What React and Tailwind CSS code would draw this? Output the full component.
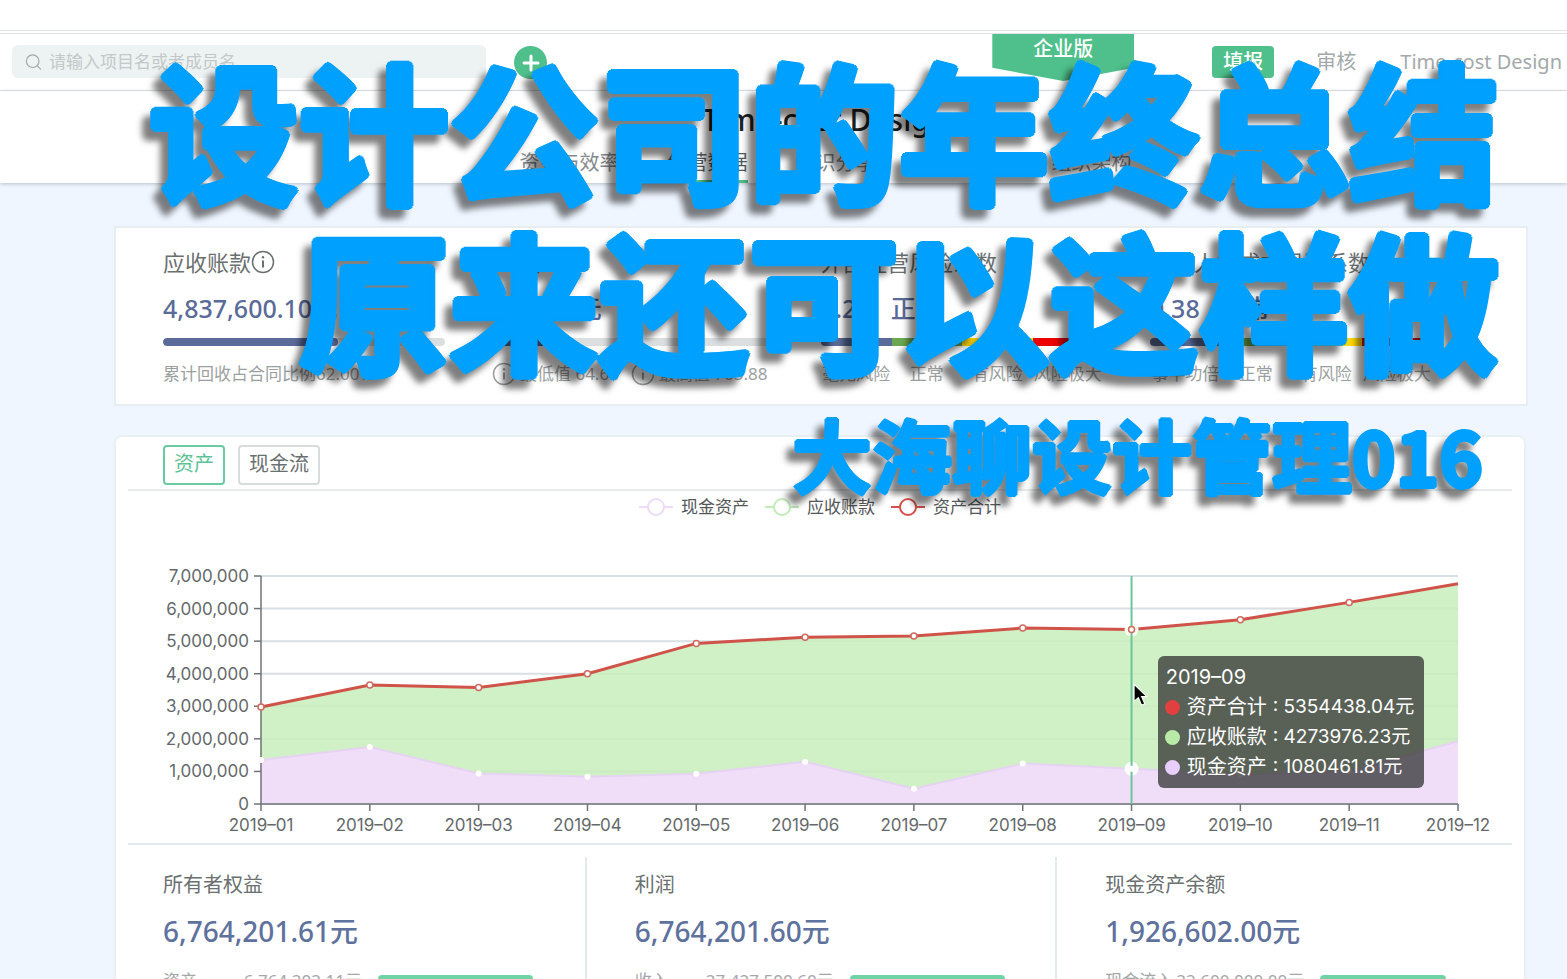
import React, { useState } from 'react';
import { Plus, Search } from 'lucide-react';

const NAV_ITEMS = ['资金与效率', '经营数据', '知识分享', '项目管理', '组织架构'];

const RISK_COLORS = ['bg-[#5a6b9b]', 'bg-[#69a84f]', 'bg-[#ffd900]', 'bg-[#ec0000]'];

const MONTHS = [
  { label: '2019–01', total: 2980000, cash: 1350000 },
  { label: '2019–02', total: 3650000, cash: 1750000 },
  { label: '2019–03', total: 3580000, cash: 940000 },
  { label: '2019–04', total: 4000000, cash: 840000 },
  { label: '2019–05', total: 4930000, cash: 930000 },
  { label: '2019–06', total: 5120000, cash: 1300000 },
  { label: '2019–07', total: 5160000, cash: 470000 },
  { label: '2019–08', total: 5400000, cash: 1240000 },
  { label: '2019–09', total: 5354438, cash: 1080461 },
  { label: '2019–10', total: 5660000, cash: 900000 },
  { label: '2019–11', total: 6190000, cash: 1000000 },
  { label: '2019–12', total: 6764201, cash: 1926602 },
];

const LEGEND = [
  { name: '现金资产', color: '#ecdcf8' },
  { name: '应收账款', color: '#c3ecb9' },
  { name: '资产合计', color: '#d6514d' },
];

const TOOLTIP_ROWS = [
  { name: '资产合计', value: '5354438.04元', dot: 'bg-[#e04040]' },
  { name: '应收账款', value: '4273976.23元', dot: 'bg-[#b9eaa8]' },
  { name: '现金资产', value: '1080461.81元', dot: 'bg-[#e9cdfb]' },
];

const SUMMARY = [
  { title: '所有者权益', value: '6,764,201.61元', label: '资产', amount: '6,764,202.11元', bar: 'w-[155px]' },
  { title: '利润', value: '6,764,201.60元', label: '收入', amount: '27,427,500.60元', bar: 'w-[155px]' },
  { title: '现金资产余额', value: '1,926,602.00元', label: '现金流入', amount: '22,600,000.00元', bar: 'w-[126px]' },
];

const InfoIcon = () => (
  <svg viewBox="0 0 24 24" className="h-6 w-6 shrink-0" fill="none" stroke="currentColor" strokeWidth="1.5" aria-hidden="true">
    <circle cx="12" cy="12" r="10.5" />
    <path d="M12 10.5v7" strokeWidth="2" />
    <circle cx="12" cy="7.2" r="1.2" fill="currentColor" stroke="none" />
  </svg>
);

const Header = () => (
  <header className="flex h-[61px] items-start border-t border-b border-[#dfe6e9]">
    <div className="mt-[2px] flex h-[57px] w-full items-start border-t border-[#dce5ee]">
      <div className="mt-[11px] ml-3 flex h-[33px] w-[474px] items-center gap-[6px] rounded-md bg-[#edf2f2] pl-3 text-[#a3a9aa]">
        <Search className="h-5 w-5" strokeWidth={1.5} />
        <input
          type="text"
          aria-label="搜索"
          placeholder="请输入项目名或者成员名"
          className="w-full bg-transparent text-[17px] outline-none placeholder:text-[#c3c8c9]"
        />
      </div>
      <button type="button" aria-label="新建" className="mt-3 ml-7 flex h-[33px] w-[33px] items-center justify-center rounded-full bg-[#4fbf8b] text-white">
        <Plus className="h-6 w-6" strokeWidth={3} />
      </button>
      <div className="ml-auto h-[47px] w-[142px] bg-[#4fbf8b] pt-px text-center text-xl leading-7 font-medium text-white [clip-path:polygon(0_0,100%_0,100%_72%,50%_100%,0_72%)]">
        企业版
      </div>
      <button type="button" className="mt-3 ml-[78px] h-8 w-[62px] rounded bg-[#4fbf8b] text-xl leading-8 font-medium text-white">
        填报
      </button>
      <a href="#audit" className="mt-3 ml-[42px] text-xl leading-8 text-[#a3a9aa]">审核</a>
      <span className="mt-3 mr-[5px] ml-11 text-xl leading-8 whitespace-nowrap text-[#a3a9aa]">Time-cost Design</span>
    </div>
  </header>
);

const Nav = () => (
  <nav className="flex h-[92px] flex-col items-center justify-between bg-white pt-[9px] pl-[84px] shadow-[0_1px_4px_rgba(0,0,0,0.22)]">
    <h1 className="text-[30px] leading-10 font-medium text-[#1c1f22]">Time-cost Design</h1>
    <ul className="flex gap-12">
      {NAV_ITEMS.map((item) => (
        <li key={item}>
          <a
            href={`#${item}`}
            className={
              item === '经营数据'
                ? 'block border-b-3 border-[#4fbf8b] pb-px text-xl leading-8 text-[#555a5c]'
                : 'block border-b-3 border-transparent pb-px text-xl leading-8 text-[#85898b]'
            }
          >
            {item}
          </a>
        </li>
      ))}
    </ul>
  </nav>
);

const Metric = ({ title, info, value, status, children }) => (
  <div className="min-w-0 pr-[47px]">
    <h2 className="flex items-center text-[22px] leading-8 whitespace-nowrap text-[#6a6f70]">
      {title}
      {info && <InfoIcon />}
    </h2>
    <p className="mt-3 flex gap-5 text-[25px] leading-9 font-medium whitespace-nowrap text-[#5a6a99]">
      {value}
      {status && <span>{status}</span>}
    </p>
    {children}
  </div>
);

const Progress = ({ fill }) => (
  <div className="mt-3 h-2 overflow-hidden rounded-full bg-[#dcdfe0]">
    <div className={`h-full rounded-full bg-[#5a6b9b] ${fill}`} />
  </div>
);

const RiskBar = ({ labels }) => (
  <>
    <div className="mt-3 grid h-2 grid-cols-4 overflow-hidden rounded-full">
      {RISK_COLORS.map((color) => (
        <div key={color} className={color} />
      ))}
    </div>
    <div className="mt-3 grid grid-cols-4 text-center text-[17px] leading-8 whitespace-nowrap text-[#9b9fa0]">
      {labels.map((label) => (
        <span key={label}>{label}</span>
      ))}
    </div>
  </>
);

const MetricsCard = () => (
  <section className="mt-[43px] mr-[39px] ml-[114px] grid h-[180px] grid-cols-4 border-2 border-[#e6eef2] bg-white pt-[18px] pr-[47px] pl-[47px]">
    <Metric title="应收账款" info value="4,837,600.10元">
      <Progress fill="w-[62%]" />
      <p className="mt-3 text-[17px] leading-8 text-[#9b9fa0]">累计回收占合同比例62.00%</p>
    </Metric>
    <Metric title="人均产值" value="128.38 元">
      <Progress fill="w-[20%]" />
      <div className="mt-3 flex gap-3 text-[17px] leading-8 whitespace-nowrap text-[#9b9fa0]">
        <span className="flex items-center gap-1"><InfoIcon />最低值 64.68</span>
        <span className="flex items-center gap-1"><InfoIcon />最高值 705.88</span>
      </div>
    </Metric>
    <Metric title="外部经营风险系数" value="0.25" status="正常">
      <RiskBar labels={['毫无风险', '正常', '有风险', '风险极大']} />
    </Metric>
    <Metric title="内部人力成本风险系数" value="0.38" status="正常">
      <RiskBar labels={['事半功倍', '正常', '有风险', '风险极大']} />
    </Metric>
  </section>
);

// Plot area inside the 1384 x 308 view box
const LEFT = 133;
const RIGHT = 1330;
const TOP = 41;
const BOTTOM = 269;

const xAt = (i) => LEFT + (i * (RIGHT - LEFT)) / (MONTHS.length - 1);
const yAt = (value) => BOTTOM - (value / 7000000) * (BOTTOM - TOP);
const toPoints = (key) => MONTHS.map((m, i) => `${xAt(i)},${yAt(m[key])}`).join(' ');

const AssetChart = ({ active }) => {
  const totals = toPoints('total');
  const cash = toPoints('cash');
  const ticks = [0, 1, 2, 3, 4, 5, 6, 7];

  return (
    <div className="relative">
      <svg viewBox="0 0 1384 308" className="block w-full font-['Inter','Noto_Sans_CJK_SC',sans-serif]" role="img" aria-label="资产趋势">
        {ticks.map((t) => (
          <line key={t} x1={LEFT} x2={RIGHT} y1={yAt(t * 1000000)} y2={yAt(t * 1000000)} stroke="#d9dfe3" strokeWidth="2" />
        ))}
        <polygon points={`${LEFT},${BOTTOM} ${totals} ${RIGHT},${BOTTOM}`} fill="#c8edbc" fillOpacity="0.85" />
        <polygon points={`${LEFT},${BOTTOM} ${cash} ${RIGHT},${BOTTOM}`} fill="#f1dcfc" fillOpacity="0.95" />
        <polyline points={cash} fill="none" stroke="#e6d3f2" strokeWidth="2" />
        <polyline points={totals} fill="none" stroke="#d0534a" strokeWidth="3" />

        <path d={`M${LEFT} ${TOP}V${BOTTOM}H${RIGHT}`} fill="none" stroke="#6e7477" strokeWidth="1.5" />
        {ticks.map((t) => (
          <g key={t}>
            <line x1={LEFT - 7} x2={LEFT} y1={yAt(t * 1000000)} y2={yAt(t * 1000000)} stroke="#6e7477" strokeWidth="1.5" />
            <text x={LEFT - 12} y={yAt(t * 1000000) + 6} textAnchor="end" fontSize="17" fill="#65696b">
              {(t * 1000000).toLocaleString('en-US')}
            </text>
          </g>
        ))}
        {MONTHS.map((m, i) => (
          <g key={m.label}>
            <line x1={xAt(i)} x2={xAt(i)} y1={BOTTOM} y2={BOTTOM + 7} stroke="#6e7477" strokeWidth="1.5" />
            <text x={xAt(i)} y={BOTTOM + 27} textAnchor="middle" fontSize="17" fill="#65696b">{m.label}</text>
          </g>
        ))}

        <circle cx={xAt(active)} cy={yAt(MONTHS[active].total)} r="7" fill="#fbfdf3" />
        <circle cx={xAt(active)} cy={yAt(MONTHS[active].cash)} r="7" fill="#fff" />
        <line x1={xAt(active)} x2={xAt(active)} y1={TOP} y2={BOTTOM} stroke="#6cc49b" strokeWidth="2" />
        {MONTHS.slice(0, -1).map((m, i) => (
          <g key={m.label}>
            <circle cx={xAt(i)} cy={yAt(m.cash)} r="3" fill="#fff" />
            <circle cx={xAt(i)} cy={yAt(m.total)} r="3" fill="#fff" stroke="#cf6a5f" strokeWidth="1.5" />
          </g>
        ))}
      </svg>

      <div className="absolute top-[121px] left-[74.4%] w-[266px] rounded-md bg-[#323232]/75 px-2 py-[6px] font-['Inter','Noto_Sans_CJK_SC',sans-serif] text-xl leading-[30px] whitespace-nowrap text-white">
        <p>{MONTHS[active].label}</p>
        {TOOLTIP_ROWS.map((row) => (
          <p key={row.name} className="flex h-[30px] items-center">
            <span className={`-ml-px mr-[7px] h-[15px] w-[15px] rounded-full ${row.dot}`} />
            {row.name}
            <span className="ml-[6px] text-[19px] leading-[30px]">: {row.value}</span>
          </p>
        ))}
      </div>
      <svg viewBox="0 0 14 22" className="absolute top-[148px] left-[72.6%] h-[24px] w-[15px]" aria-hidden="true">
        <path d="M1 1v16l4-3.5 3 7 3-1.3-3-6.7h5z" fill="#000" stroke="#fff" strokeWidth="1" />
      </svg>
    </div>
  );
};

const AssetsCard = () => {
  const [tab, setTab] = useState('资产');

  return (
    <section className="mt-[29px] mr-[41px] ml-[114px] rounded-lg border-2 border-[#e9f0f4] bg-white px-3">
      <div className="flex gap-[13px] border-b-2 border-[#e6ecee] pt-2 pb-1 pl-[35px]">
        {['资产', '现金流'].map((name) => (
          <button
            key={name}
            type="button"
            onClick={() => setTab(name)}
            className={
              tab === name
                ? 'h-10 rounded border-2 border-[#6ccaa0] px-[9px] pb-[2px] text-xl leading-8 text-[#5cc296]'
                : 'h-10 rounded border-2 border-[#d8dcdd] px-[9px] pb-[2px] text-xl leading-8 text-[#6a6f70]'
            }
          >
            {name}
          </button>
        ))}
      </div>

      <ul className="flex h-11 justify-center gap-4 pt-1 text-[17px] leading-6 text-[#54585a]">
        {LEGEND.map((item) => (
          <li key={item.name} className="flex items-start gap-2">
            <svg viewBox="0 0 34 24" className="h-6 w-[34px]" aria-hidden="true">
              <line x1="0" x2="34" y1="12" y2="12" stroke={item.color} strokeWidth="2" />
              <circle cx="17" cy="12" r="8" fill="#fff" stroke={item.color} strokeWidth="2" />
            </svg>
            {item.name}
          </li>
        ))}
      </ul>

      <AssetChart active={8} />

      <div className="grid grid-cols-[33fr_34fr_33fr] border-t-2 border-[#e3eaec] pt-3">
        {SUMMARY.map((item, i) => (
          <div key={item.title} className={i === 0 ? 'pl-[35px]' : 'border-l-2 border-[#e3eaec] pl-12'}>
            <h3 className="pt-3 text-xl leading-8 text-[#6a6f70]">{item.title}</h3>
            <p className="mt-2 text-[28px] leading-[44px] font-medium text-[#5f719d]">{item.value}</p>
            <div className="mt-4 mb-6 flex items-center text-[17px] leading-6 whitespace-nowrap text-[#a3a7a8]">
              <div className="flex w-[199px] justify-between">
                <span>{item.label}</span>
                <span>{item.amount}</span>
              </div>
              <div className={`ml-4 h-3 rounded-sm bg-[#6fd3a4] ${item.bar}`} />
            </div>
          </div>
        ))}
      </div>
    </section>
  );
};

// Rounded heavy lettering: hard shadows in a ring thicken and round the strokes
const TitleOverlay = () => (
  <div className="pointer-events-none absolute inset-x-0 top-[42px] z-10 pr-[68px] text-right font-['Noto_Sans_CJK_SC',sans-serif] font-bold whitespace-nowrap text-[#00a0ff] drop-shadow-[-8px_9px_3px_rgba(0,0,0,0.5)]">
    <div className="text-[150px] leading-[170px] [text-shadow:4px_0_#00a0ff,3px_2px_#00a0ff,2px_3px_#00a0ff,0_4px_#00a0ff,-2px_3px_#00a0ff,-3px_2px_#00a0ff,-4px_0_#00a0ff,-3px_-2px_#00a0ff,-2px_-3px_#00a0ff,0_-4px_#00a0ff,2px_-3px_#00a0ff,3px_-2px_#00a0ff]">
      <p>设计公司的年终总结</p>
      <p>原来还可以这样做</p>
    </div>
    <p className="mt-5 pr-4 text-[80px] leading-[100px] [text-shadow:2px_0_#00a0ff,1px_1px_#00a0ff,0_2px_#00a0ff,-1px_1px_#00a0ff,-2px_0_#00a0ff,-1px_-1px_#00a0ff,0_-2px_#00a0ff,1px_-1px_#00a0ff]">
      大海聊设计管理<span className="text-[74px]">016</span>
    </p>
  </div>
);

const App = () => (
  <div className="relative h-screen overflow-hidden bg-[#eff6ff] font-['Noto_Sans','Noto_Sans_CJK_SC',sans-serif]">
    <div className="bg-white pt-[30px]">
      <Header />
    </div>
    <Nav />
    <MetricsCard />
    <AssetsCard />
    <TitleOverlay />
  </div>
);

export default App;
